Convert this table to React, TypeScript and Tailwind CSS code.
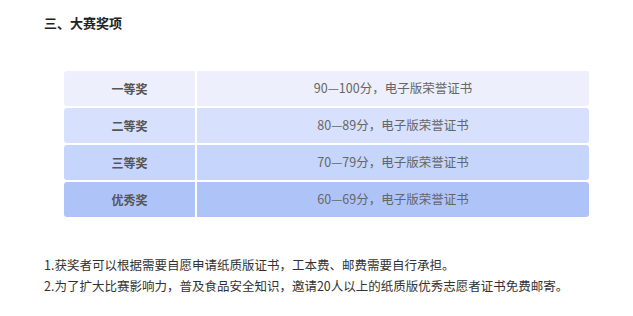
const prizes = [
  { name: '一等奖', desc: '90—100分，电子版荣誉证书', bg: 'bg-[#edf0fc]' },
  { name: '二等奖', desc: '80—89分，电子版荣誉证书', bg: 'bg-[#d7e1fd]' },
  { name: '三等奖', desc: '70—79分，电子版荣誉证书', bg: 'bg-[#c5d5fc]' },
  { name: '优秀奖', desc: '60—69分，电子版荣誉证书', bg: 'bg-[#aec4f9]' },
]

const App = () => {
  return (
    <div className="w-[633px] h-[316px] bg-white pl-[44px] pt-[13px] font-['Noto_Sans_CJK_SC',sans-serif] text-[#333]">
      <h2 className="text-[13px] leading-[20px] font-bold text-[#222]">三、大赛奖项</h2>

      <div className="mt-[38px] ml-[20px] w-[525px] flex flex-col gap-[2px]">
        {prizes.map((p) => (
          <div key={p.name} className="flex h-[35px] gap-[2px] rounded-[3px] overflow-hidden">
            <div className={`${p.bg} w-[131px] flex items-center justify-center text-[12px] font-bold text-[#555]`}>
              {p.name}
            </div>
            <div className={`${p.bg} flex-1 flex items-center justify-center text-[12.5px] text-[#666]`}>
              {p.desc}
            </div>
          </div>
        ))}
      </div>

      <div className="mt-[37px] text-[12.5px] leading-[21px] text-[#333]">
        <p>1.获奖者可以根据需要自愿申请纸质版证书，工本费、邮费需要自行承担。</p>
        <p>2.为了扩大比赛影响力，普及食品安全知识，邀请20人以上的纸质版优秀志愿者证书免费邮寄。</p>
      </div>
    </div>
  )
}

export default App
